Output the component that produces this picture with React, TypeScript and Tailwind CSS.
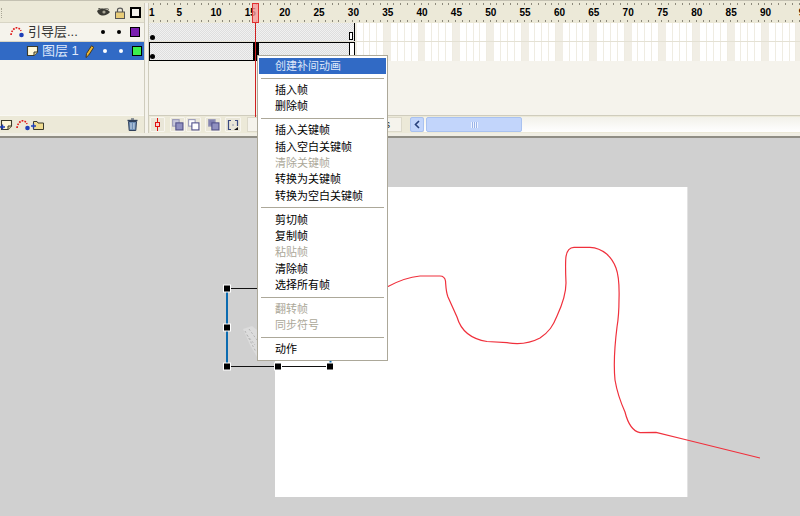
import React from 'react';

const marks = [5, 10, 15, 20, 25, 30, 35, 40, 45, 50, 55, 60, 65, 70, 75, 80, 85, 90];

type Item = { label?: string; off?: boolean; active?: boolean };

const menu: Item[] = [
  { label: '创建补间动画', active: true },
  {},
  { label: '插入帧' },
  { label: '删除帧' },
  {},
  { label: '插入关键帧' },
  { label: '插入空白关键帧' },
  { label: '清除关键帧', off: true },
  { label: '转换为关键帧' },
  { label: '转换为空白关键帧' },
  {},
  { label: '剪切帧' },
  { label: '复制帧' },
  { label: '粘贴帧', off: true },
  { label: '清除帧' },
  { label: '选择所有帧' },
  {},
  { label: '翻转帧', off: true },
  { label: '同步符号', off: true },
  {},
  { label: '动作' },
];

const handles = [
  [227, 288],
  [227, 327],
  [227, 366],
  [278, 366],
  [330, 366],
];

const GuideIcon = ({ className = '' }: { className?: string }) => (
  <svg viewBox="0 0 15 12" className={`w-[15px] h-[12px] ${className}`}>
    <path d="M1 9 C2 2 8 -1 11 5" fill="none" stroke="#e01010" strokeWidth="1.6" strokeDasharray="1.7 1.2" />
    <circle cx="11.5" cy="9" r="2.3" fill="#1f3fb8" />
  </svg>
);

const NoteIcon = ({ plus = false }: { plus?: boolean }) => (
  <svg viewBox="0 0 13 12" className="w-[13px] h-[12px]">
    <path d="M1.5 1.5 H11.5 V7 L8 10.5 H1.5 Z" fill="#fff8d8" stroke="#3a3a2c" strokeWidth="1.1" />
    <path d="M8 10.5 V7 H11.5" fill="#e8d890" stroke="#3a3a2c" />
    {plus && <path d="M0 8 H5 M2.5 5.5 V10.5" stroke="#1f3fb8" strokeWidth="1.4" />}
  </svg>
);

const Swatch = ({ color }: { color: string }) => (
  <span className={`w-[10px] h-[10px] border border-black ${color}`} />
);

const FrameButton = ({ children, className = '' }: { children: React.ReactNode; className?: string }) => (
  <div className={`h-[15px] flex items-center justify-center bg-[#e9e6d8] border border-[#f7f5ee] rounded-[1px] ${className}`}>
    {children}
  </div>
);

const Onion = ({ back, front }: { back: string; front: string }) => (
  <svg viewBox="0 0 12 12" className="w-[13px] h-[13px]">
    <rect x="1.5" y="1.5" width="6" height="6" fill={back} stroke="#9a9ab8" />
    <rect x="4.5" y="4.5" width="6.5" height="6.5" fill={front} stroke="#50508a" />
  </svg>
);

const Dot = ({ className = '' }: { className?: string }) => (
  <span className={`w-[4px] h-[4px] rounded-full ${className}`} />
);

export default function App() {
  return (
    <div className="relative w-[800px] h-[516px] overflow-hidden flex flex-col bg-[#d0d0d0] font-['Liberation_Sans','Noto_Sans_CJK_SC',sans-serif]">
      {/* timeline */}
      <div className="h-[3px] bg-[#ece9d8] border-t border-[#c4c1b2]" />
      <div className="flex h-[130px] bg-[#f5f3ec]">
        {/* layers */}
        <div className="w-[144px] flex flex-col">
          <div className="h-[20px] flex items-center bg-[#ece9d8] border-b border-[#d8d5c5]">
            <span className="w-[1px] h-[10px] ml-[1px] border-l border-dotted border-[#a8a595]" />
            <svg viewBox="0 0 13 9" className="w-[13px] h-[9px] ml-[95px]">
              <path d="M0 3 C3 0 9 0 13 4 C10 8 4 9 1 5 Z" fill="#3a3a34" />
              <circle cx="7" cy="4" r="1.6" fill="#a8a595" />
              <path d="M1 1 C4 -0.5 9 -0.5 12 1.5" fill="none" stroke="#3a3a34" strokeWidth="0.8" />
            </svg>
            <svg viewBox="0 0 10 12" className="w-[10px] h-[12px] ml-[5px]">
              <path d="M2.5 5 V3 C2.5 0.5 7.5 0.5 7.5 3 V5" fill="none" stroke="#555" strokeWidth="1.2" />
              <rect x="0.5" y="5" width="9" height="6.5" fill="#e8cc78" stroke="#555" />
            </svg>
            <span className="w-[11px] h-[11px] ml-[5px] border-2 border-black bg-[#f5f3ec]" />
          </div>
          <div className="h-[19px] flex items-center text-[13px] text-[#333] border-b border-[#d8d5c5] bg-[#f5f3ec]">
            <GuideIcon className="ml-[10px]" />
            <span className="ml-[3px] w-[73px] whitespace-nowrap">引导层...</span>
            <Dot className="bg-black" />
            <Dot className="bg-black ml-[12px]" />
            <span className="ml-[9px] flex"><Swatch color="bg-[#7a1fb0]" /></span>
          </div>
          <div className="h-[18px] flex items-center text-[13px] text-[#dfe8fa] bg-[#316ac5]">
            <span className="ml-[26px] flex"><NoteIcon /></span>
            <span className="ml-[3px] w-[43px] whitespace-nowrap">图层 1</span>
            <svg viewBox="0 0 9 13" className="w-[9px] h-[13px] mr-[9px]">
              <path d="M1 12.5 L1.5 8.5 L6.5 0.8 L8.8 2.3 L3.8 10 Z" fill="#efb832" stroke="#3a2e18" strokeWidth="0.9" />
            </svg>
            <Dot className="bg-white" />
            <Dot className="bg-white ml-[12px]" />
            <span className="ml-[9px] flex"><Swatch color="bg-[#3cf04c]" /></span>
          </div>
          <div className="flex-1" />
          <div className="h-[18px] flex items-center bg-[#ece9d8] border-t border-[#f9f8f2]">
            <span className="flex"><NoteIcon plus /></span>
            <GuideIcon className="ml-[3px]" />
            <svg viewBox="0 0 14 12" className="w-[14px] h-[12px]">
              <path d="M2.5 10.5 V2.5 H6 L7 4 H12.5 V10.5 Z" fill="#f0dc90" stroke="#3a3a2c" />
              <path d="M0 7 H5 M2.5 4.5 V9.5" stroke="#1f3fb8" strokeWidth="1.4" />
            </svg>
            <svg viewBox="0 0 11 13" className="w-[11px] h-[13px] ml-[82px]">
              <path d="M0.5 2.5 H10.5" stroke="#30405a" strokeWidth="1.4" />
              <path d="M4 1 H7" stroke="#30405a" />
              <path d="M1.5 3.5 H9.5 L8.8 12.5 H2.2 Z" fill="#6f8fb5" stroke="#30405a" />
              <path d="M4 5 V11 M6.9 5 V11" stroke="#cfdcec" />
            </svg>
          </div>
        </div>

        {/* splitter */}
        <div className="w-[5px] bg-[#f5f3ec] border-l border-r border-[#cfccbd]" />

        {/* frames */}
        <div className="w-[651px] flex flex-col">
          <div className="relative h-[20px] flex items-center pb-[2px] bg-[#ece9d8] text-[10px] font-bold text-black overflow-hidden">
            <div className="absolute left-[4px] right-0 top-0 h-[2px] bg-[repeating-linear-gradient(90deg,#8d8a7c_0,#8d8a7c_1px,transparent_1px,transparent_6.87px)]" />
            <div className="absolute left-[4px] right-0 bottom-[1px] h-[2px] bg-[repeating-linear-gradient(90deg,#8d8a7c_0,#8d8a7c_1px,transparent_1px,transparent_6.87px)]" />
            <span className="w-[15.5px] shrink-0">1</span>
            {marks.map((m) => (
              <span key={m} className={`w-[34.35px] shrink-0 text-center ${m < 10 ? 'pr-[5px]' : ''}`}>
                {m}
              </span>
            ))}
            <span className="shrink-0 text-left pl-[16px]">9</span>
          </div>
          <div className="relative h-[19px] flex border-b border-[#e4e1d4]">
            <div className="w-[206px] flex items-end justify-end pr-[1px] pb-[1px] border-r border-black bg-[repeating-conic-gradient(#dedede_0_25%,#f1f1f1_0_50%)] bg-[length:2px_2px]">
              <span className="w-[4px] h-[8px] border border-black bg-white" />
            </div>
            <div className="flex-1 bg-[repeating-linear-gradient(90deg,#f1eee5_0,#f1eee5_1.77px,#fff_1.77px,#fff_7.64px,#efece2_7.64px,#efece2_8.64px,#fff_8.64px,#fff_14.5px,#efece2_14.5px,#efece2_15.5px,#fff_15.5px,#fff_21.4px,#efece2_21.4px,#efece2_22.4px,#fff_22.4px,#fff_28.25px,#efece2_28.25px,#efece2_29.25px,#f1eee5_29.25px,#f1eee5_34.35px)]" />
            <Dot className="absolute left-[1px] top-[12px] w-[5px] h-[5px] bg-black" />
          </div>
          <div className="relative h-[19px] flex">
            <div className="w-[104px] border border-r-0 border-black bg-[repeating-conic-gradient(#dedede_0_25%,#f1f1f1_0_50%)] bg-[length:2px_2px]" />
            <div className="w-[6px] bg-black" />
            <div className="w-[90px] border-y border-black bg-[repeating-conic-gradient(#dedede_0_25%,#f1f1f1_0_50%)] bg-[length:2px_2px]" />
            <div className="w-[6px] border border-black bg-white" />
            <div className="flex-1 bg-[repeating-linear-gradient(90deg,#f1eee5_0,#f1eee5_1.77px,#fff_1.77px,#fff_7.64px,#efece2_7.64px,#efece2_8.64px,#fff_8.64px,#fff_14.5px,#efece2_14.5px,#efece2_15.5px,#fff_15.5px,#fff_21.4px,#efece2_21.4px,#efece2_22.4px,#fff_22.4px,#fff_28.25px,#efece2_28.25px,#efece2_29.25px,#f1eee5_29.25px,#f1eee5_34.35px)]" />
            <Dot className="absolute left-[1px] top-[12px] w-[5px] h-[5px] bg-black" />
          </div>
          <div className="flex-1" />
          <div className="h-[18px] flex items-center bg-[#ece9d8] border-t border-[#cfccbd] pl-[1px]">
            <FrameButton className="w-[15px]">
              <svg viewBox="0 0 7 13" className="w-[7px] h-[13px]">
                <path d="M3.5 0 V13" stroke="#e01010" />
                <rect x="1.5" y="4.5" width="4" height="4" fill="#f8d0d0" stroke="#e01010" />
              </svg>
            </FrameButton>
            <FrameButton className="w-[15px] ml-[5px]"><Onion back="#c8c8dc" front="#9090c0" /></FrameButton>
            <FrameButton className="w-[15px] ml-[1px]"><Onion back="#fff" front="#fff" /></FrameButton>
            <FrameButton className="w-[16px] ml-[4px]"><Onion back="#8080b0" front="#9090c0" /></FrameButton>
            <FrameButton className="w-[16px] ml-[4px]">
              <svg viewBox="0 0 12 12" className="w-[12px] h-[12px]">
                <path d="M4 1.5 H1.5 V10.5 H4 M8 1.5 H10.5 V7 M5.5 6 H6.5" fill="none" stroke="#3a4a80" strokeWidth="1.2" />
                <path d="M7 11 L11 11 L11 8 Z" fill="#111" />
              </svg>
            </FrameButton>
            <div className="w-[155px] h-[15px] ml-[6px] flex items-center justify-end pr-[11px] bg-[#f5f3ec] border border-[#dcd9ca] text-[10px] leading-none text-[#222]">
              s
            </div>
            <div className="w-[14px] h-[15px] ml-[8px] flex items-center justify-center rounded-[2px] bg-[#c2d5fb] border border-[#a9c2f0]">
              <svg viewBox="0 0 6 9" className="w-[6px] h-[9px]">
                <path d="M5 1 L1.5 4.5 L5 8" fill="none" stroke="#27407a" strokeWidth="1.6" />
              </svg>
            </div>
            <div className="flex-1 h-[15px] flex pl-[2px] bg-[linear-gradient(#f2f1ea,#fff)]">
              <div className="w-[96px] flex items-center justify-center rounded-[2px] bg-[#c2d5fb] border border-[#a9c2f0]">
                <span className="w-[7px] h-[6px] bg-[repeating-linear-gradient(90deg,#eef3ff_0,#eef3ff_1px,#9ab4e8_1px,#9ab4e8_2px)]" />
              </div>
            </div>
          </div>
        </div>
      </div>
      <div className="h-[5px] bg-[#f0eee4] border-b-2 border-[#8f8d84]" />

      {/* stage */}
      <div className="relative flex-1">
        <div className="ml-[275px] mt-[49px] w-[413px] h-[310px] bg-white border-r border-[#e2e2e2]" />
        <svg viewBox="0 138 800 378" className="absolute inset-0 w-[800px] h-[378px]">
          <path d="M243 329 L252 326 L257 330 L257 357 L250 345 Z" fill="#dcdcdc" />
          <path
            d="M245 331 L256 352 M249 329 L257 340 M247 335 L255 345"
            stroke="#b4b4b4"
            strokeDasharray="2 2"
          />
          <path
            d="M387 287 C398 281 409 277 420 276 L440 276 C444 276 445 278 445.5 281 C446 288 446 292 448 297 L457 317 C461 331 471 339 487 341.5 L507 342.7 C515 344 527 345 540 338 C549 332 553 326 557 316 C563 303 566 292 566 283 C565.5 272 565.5 265 565.7 260 C566 252 568 247.5 574 247.3 L590 247.3 C603 248 612 257 616 268 C619 276 619.5 285 619 300 C619 312 618.5 318 617 327 C615 343 613 360 615 380 C617 392 621 403 625 412 C628 424 632 431 640 432.7 L656 432.3 L687 440 L760 458"
            fill="none"
            stroke="#f0303c"
            strokeWidth="1.2"
          />
          <path d="M227 288.5 H330.5 V366.5 H227" fill="none" stroke="#111" />
          <path d="M227 288 V366" stroke="#0b6bb0" strokeWidth="2" />
          <path d="M330.5 352 V366" stroke="#0b6bb0" strokeWidth="2" />
          {handles.map(([x, y]) => (
            <rect key={`${x}-${y}`} x={x - 3.5} y={y - 3.5 + 0.5} width="7" height="7" fill="#000" stroke="#fff" />
          ))}
        </svg>
      </div>

      {/* playhead */}
      <div className="absolute left-[252px] top-[3px] w-[7px] h-[20px] bg-[#f89a9a]/80 border border-[#e03030]" />
      <div className="absolute left-[255px] top-[23px] w-[1px] h-[94px] bg-[#d02020]" />

      {/* context menu */}
      <div className="absolute left-[257px] top-[55px] w-[131px] h-[306px] pt-[2px] px-[1px] bg-white border border-[#aca899] text-[11px] text-black">
        {menu.map((item, i) =>
          item.label ? (
            <div
              key={i}
              className={`h-[16.4px] pl-[16px] flex items-center ${item.active ? 'bg-[#316ac5] text-[#dfe8fa]' : ''} ${item.off ? 'text-[#aca899]' : ''}`}
            >
              {item.label}
            </div>
          ) : (
            <div key={i} className="h-[7.5px] flex items-center px-[2px]">
              <div className="w-full h-[1px] bg-[#aca899]" />
            </div>
          ),
        )}
      </div>
    </div>
  );
}
